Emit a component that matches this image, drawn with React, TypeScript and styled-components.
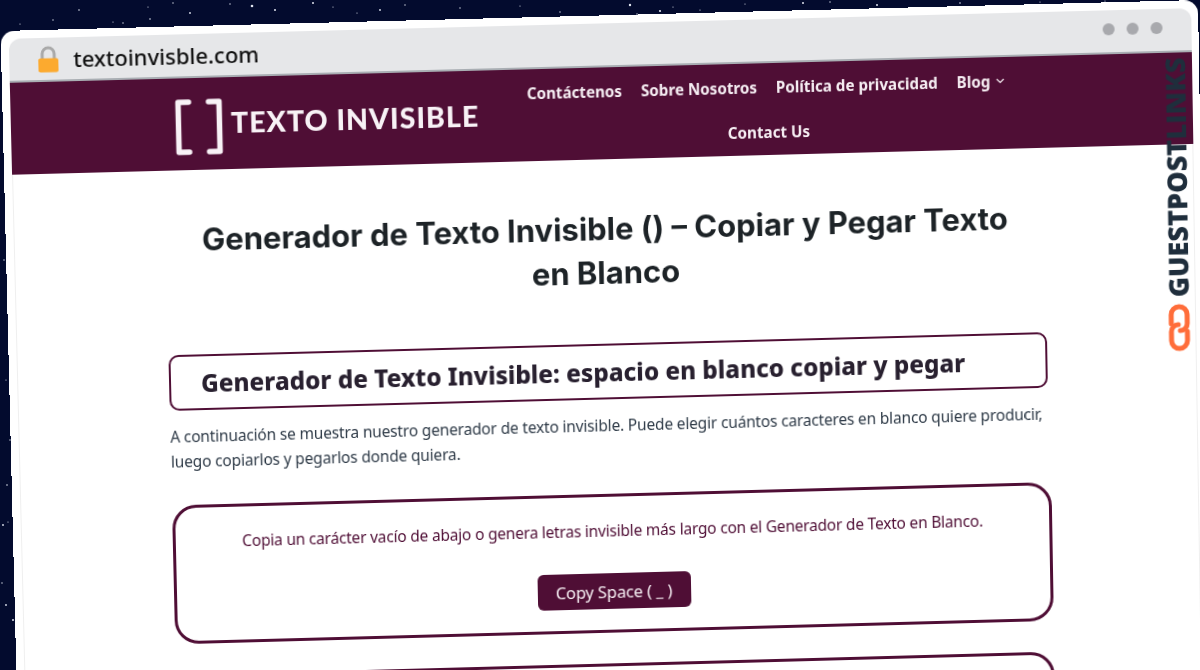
import React from 'react';
import styled, { createGlobalStyle } from 'styled-components';

const WIN_W = 1198;
const WIN_H = 690;
const PLUM = '#4f0e35';

// square-to-quad homography, so the window can be pinned by its four corners
function cornerPin (w: number, h: number, [x0, y0, x1, y1, x2, y2, x3, y3]: number[]): string {
  const dx1 = x1 - x2;
  const dx2 = x3 - x2;
  const sx = x0 - x1 + x2 - x3;
  const dy1 = y1 - y2;
  const dy2 = y3 - y2;
  const sy = y0 - y1 + y2 - y3;
  const den = dx1 * dy2 - dx2 * dy1;
  const g = (sx * dy2 - dx2 * sy) / den;
  const k = (dx1 * sy - sx * dy1) / den;
  const a = x1 - x0 + g * x1;
  const b = x3 - x0 + k * x3;
  const d = y1 - y0 + g * y1;
  const e = y3 - y0 + k * y3;

  return `matrix3d(${[a / w, d / w, 0, g / w, b / h, e / h, 0, k / h, 0, 0, 1, 0, x0, y0, 0, 1].join(',')})`;
}

const WINDOW_TRANSFORM = cornerPin(WIN_W, WIN_H, [0.5, 31, 1198, 0, 1209, 686, 17.5, 718]);

const STARS: [number, number, number][] = [
  [252, 6, 1.3], [275, 10, 1], [79, 10, 0.8], [190, 13, 0.9], [150, 19, 0.8], [53, 20, 0.7], [123, 23, 0.7],
  [313, 3, 1], [333, 7, 0.6], [380, 10, 0.9], [405, 5, 0.7], [173, 3, 0.7], [148, 7, 0.6], [230, 4, 0.7],
  [357, 13, 0.6], [113, 22, 0.6], [630, 5, 1.2], [660, 11, 1.1], [803, 3, 1], [830, 2, 0.7], [877, 5, 1],
  [637, 14, 0.7], [673, 7, 0.6], [700, 10, 0.6], [7, 485, 0.8], [3, 525, 0.9], [2, 583, 0.7], [6, 605, 0.9],
  [13, 620, 1], [8, 522, 0.6], [460, 8, 0.7], [520, 6, 0.6], [560, 12, 0.7], [745, 4, 0.6], [960, 3, 0.8],
  [1040, 2, 0.6], [1105, 1, 0.6], [20, 24, 0.6], [8, 140, 0.6], [4, 260, 0.7], [6, 380, 0.6], [10, 440, 0.7]
];

const GlobalStyle = createGlobalStyle`
  html, body {
    margin: 0;
    padding: 0;
    background: #030b2e;
  }
`;

const Scene = styled.div`
  position: relative;
  width: 1200px;
  height: 670px;
  overflow: hidden;
  background: #030b2e;
`;

const Stars = styled.svg`
  position: absolute;
  inset: 0;
`;

const BrowserWindow = styled.div`
  position: relative;
  box-sizing: border-box;
  width: ${WIN_W}px;
  height: ${WIN_H}px;
  padding: 8px 7px 0 8px;
  overflow: hidden;
  background: #fff;
  border-radius: 14px 14px 0 0;
  transform-origin: 0 0;
  transform: ${WINDOW_TRANSFORM};
`;

const Chrome = styled.div`
  display: flex;
  align-items: center;
  box-sizing: border-box;
  height: 44px;
  padding: 0 29px 0 28px;
  background: #e6e7e9;
  border-bottom: 2px solid #a9aeb3;
  border-radius: 12px 12px 0 0;
`;

const LockIcon = styled.svg`
  flex: none;
  width: 22px;
  height: 27px;
`;

const Url = styled.div`
  margin-left: 14px;
  font: 500 22px 'Noto Sans', sans-serif;
  color: #111;
`;

const Dots = styled.div`
  display: flex;
  gap: 12px;
  margin-left: auto;
  margin-top: -5px;
`;

const Dot = styled.span`
  width: 12px;
  height: 12px;
  border-radius: 50%;
  background: #a8a9ad;
`;

const Page = styled.div`
  height: 100%;
  background: #fff;
  border: solid #efefef;
  border-width: 0 1px;
`;

const Header = styled.header`
  display: flex;
  align-items: center;
  box-sizing: border-box;
  height: 92px;
  padding-left: 163px;
  margin: 0 -1px;
  background: ${PLUM};
`;

const Logo = styled.div`
  display: flex;
  align-items: center;
  flex: none;
  width: 342px;
  padding-top: 6px;
  gap: 7px;
  color: #f8f2f6;
`;

const Brackets = styled.svg`
  flex: none;
  width: 50px;
  height: 56px;
`;

const LogoText = styled.span`
  margin-top: -8px;
  font: 900 28.5px Lato, sans-serif;
  letter-spacing: 1px;
  white-space: nowrap;
`;

const Nav = styled.nav`
  display: flex;
  flex-wrap: wrap;
  justify-content: center;
  align-items: center;
  flex: none;
  width: 501px;
  column-gap: 19px;
`;

const NavItem = styled.a`
  display: flex;
  align-items: center;
  gap: 5px;
  height: 45px;
  font: 700 15.2px 'Noto Sans', sans-serif;
  color: #f6eef3;
  white-space: nowrap;

  &:last-child {
    margin-left: 5px;
  }
`;

const Content = styled.main`
  display: flex;
  flex-direction: column;
  width: 883px;
  margin-left: 151px;
`;

const Title = styled.h1`
  margin: 48px 3px 49px 0;
  font: 700 31px/44px Inter, sans-serif;
  color: #1d2327;
  text-align: center;
`;

const SectionHeading = styled.h2`
  display: flex;
  align-items: center;
  box-sizing: border-box;
  height: 56px;
  margin: 0 2px 0 0;
  padding-left: 30px;
  border: 2px solid ${PLUM};
  border-radius: 10px;
  font: 800 24.3px 'Noto Sans', sans-serif;
  color: #28202f;
  white-space: nowrap;
`;

const Lead = styled.p`
  margin: 14px 0 0;
  font: 400 15.5px/25px 'Noto Sans', sans-serif;
  letter-spacing: -0.16px;
  color: #2f3b48;
  white-space: nowrap;
`;

const Card = styled.section<{ $gap: number }>`
  display: flex;
  flex-direction: column;
  align-items: center;
  box-sizing: border-box;
  height: 140px;
  flex: none;
  margin-top: ${p => p.$gap}px;
  padding-top: 21px;
  border: 3px solid ${PLUM};
  border-radius: 24px;
`;

const CardText = styled.p`
  margin: 0;
  font: 400 15.5px/26px 'Noto Sans', sans-serif;
  letter-spacing: -0.19px;
  color: ${PLUM};
  white-space: nowrap;
`;

const CopyButton = styled.button`
  width: 154px;
  height: 36px;
  margin-top: 30px;
  border: 0;
  border-radius: 6px;
  background: ${PLUM};
  font: 400 16.5px 'Noto Sans', sans-serif;
  letter-spacing: -0.1px;
  color: #f8f1f5;
`;

const Watermark = styled.div`
  position: absolute;
  left: 1162px;
  top: 57px;
  display: flex;
  flex-direction: column;
  align-items: center;
  width: 24px;
  gap: 7px;
`;

const WatermarkText = styled.span`
  writing-mode: vertical-rl;
  transform: rotate(180deg);
  font: 800 27.2px/24px 'Open Sans', sans-serif;
  color: #1f2e3c;
  white-space: nowrap;
`;

const LinkIcon = styled.svg`
  width: 24px;
  height: 48px;
`;

export default function App (): React.ReactElement {
  return (
    <Scene>
      <GlobalStyle />
      <Stars
        height={670}
        width={1200}
      >
        {STARS.map(([x, y, r]) => (
          <circle
            cx={x}
            cy={y}
            fill='#dfe3ee'
            key={`${x}-${y}`}
            r={r}
          />
        ))}
      </Stars>
      <BrowserWindow>
        <Chrome>
          <LockIcon viewBox='0 0 22 27'>
            <path
              d='M5 13V8a6 6 0 0 1 12 0v5'
              fill='none'
              stroke='#a9a9a9'
              strokeWidth='3'
            />
            <rect
              fill='#fcaa2f'
              height='14'
              rx='2'
              width='20'
              x='1'
              y='12.5'
            />
          </LockIcon>
          <Url>textoinvisble.com</Url>
          <Dots>
            <Dot />
            <Dot />
            <Dot />
          </Dots>
        </Chrome>
        <Page>
          <Header>
            <Logo>
              <Brackets viewBox='0 0 50 56'>
                <path
                  d='M15 3H4.500v50H15M35 3h10.500v50H35'
                  fill='none'
                  stroke='currentColor'
                  strokeLinecap='round'
                  strokeLinejoin='round'
                  strokeWidth='5.500'
                />
              </Brackets>
              <LogoText>TEXTO INVISIBLE</LogoText>
            </Logo>
            <Nav>
              <NavItem>Contáctenos</NavItem>
              <NavItem>Sobre Nosotros</NavItem>
              <NavItem>Política de privacidad</NavItem>
              <NavItem>
                Blog
                <svg
                  fill='none'
                  height='6'
                  stroke='currentColor'
                  strokeWidth='1.2'
                  viewBox='0 0 9 6'
                  width='9'
                >
                  <path d='M1 1l3.5 3.5L8 1' />
                </svg>
              </NavItem>
              <NavItem>Contact Us</NavItem>
            </Nav>
          </Header>
          <Content>
            <Title>
              Generador de Texto Invisible () – Copiar y Pegar Texto
              <br />
              en Blanco
            </Title>
            <SectionHeading>Generador de Texto Invisible: espacio en blanco copiar y pegar</SectionHeading>
            <Lead>
              A continuación se muestra nuestro generador de texto invisible. Puede elegir cuántos caracteres en blanco quiere producir,
              <br />
              luego copiarlos y pegarlos donde quiera.
            </Lead>
            <Card $gap={31}>
              <CardText>Copia un carácter vacío de abajo o genera letras invisible más largo con el Generador de Texto en Blanco.</CardText>
              <CopyButton>Copy Space ( _ )</CopyButton>
            </Card>
            <Card $gap={31} />
          </Content>
        </Page>
        <Watermark>
          <WatermarkText>GUESTPOSTLINKS</WatermarkText>
          <LinkIcon viewBox='0 0 24 48'>
            <g
              fill='none'
              stroke='#ff6d3a'
              strokeLinecap='round'
              strokeWidth='5'
            >
              <path d='M4 20V11a8 8 0 0 1 16 0v9a7 7 0 0 1-7 7' />
              <path d='M20 28v9a8 8 0 0 1-16 0v-9a7 7 0 0 1 7-7' />
            </g>
          </LinkIcon>
        </Watermark>
      </BrowserWindow>
    </Scene>
  );
}
